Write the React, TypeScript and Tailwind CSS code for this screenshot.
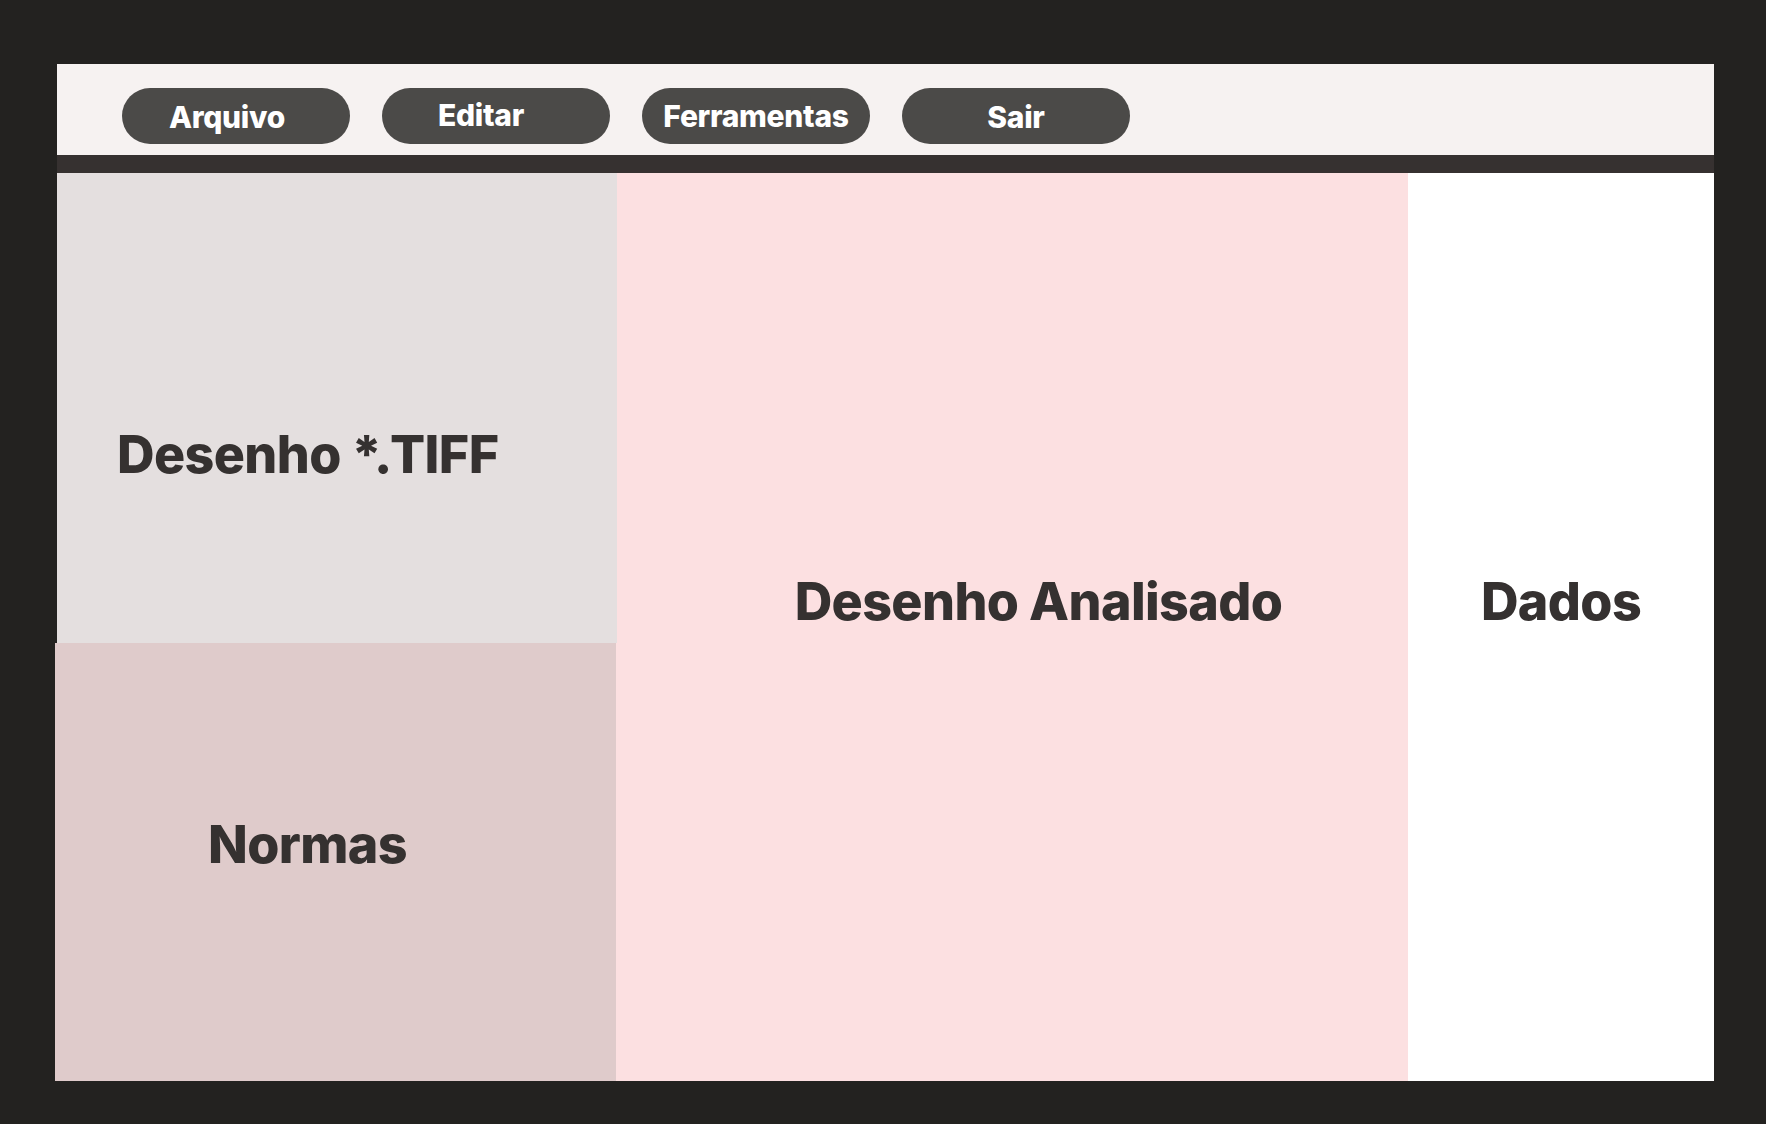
// App.tsx — layout mockup: menu bar + three analysis panels

const menu = [
  { label: 'Arquivo', cls: 'pt-[2px] pr-[18px]' },
  { label: 'Editar', cls: 'pr-[30px] pb-[3px]' },
  { label: 'Ferramentas', cls: '' },
  { label: 'Sair', cls: 'pt-[2px]' },
]

function MenuButton({ label, cls }: { label: string; cls: string }) {
  return (
    <button
      className={`w-[228px] h-[56px] rounded-full bg-[#4b4a48] text-white text-[30px] font-extrabold tracking-[-0.01em] leading-none flex items-center justify-center ${cls}`}
    >
      {label}
    </button>
  )
}

function Title({ children }: { children: string }) {
  return <h2 className="text-[52px] font-extrabold tracking-[-0.012em] leading-none">{children}</h2>
}

export default function App() {
  return (
    <div
      className="w-full min-h-screen h-[1124px] bg-[#232220] pl-[57px] pt-[64px]"
      style={{ fontFamily: 'Inter, "Noto Sans", sans-serif' }}
    >
      <div className="w-[1657px] h-[1017px] flex flex-col text-[#353130]">
        {/* Header */}
        <header className="h-[91px] bg-[#f6f2f1] flex items-start gap-[32px] pl-[65px] pt-[24px]">
          {menu.map((m) => (
            <MenuButton key={m.label} label={m.label} cls={m.cls} />
          ))}
        </header>
        <div className="h-[18px] bg-[#363130]" />

        {/* Body */}
        <div className="flex-1 flex">
          <div className="w-[560px] flex flex-col bg-[#fce0e1]">
            <div className="h-[470px] bg-[#e4dfdf] flex items-center pl-[60px] pt-[94px]">
              <Title>Desenho *.TIFF</Title>
            </div>
            <div className="flex-1 -ml-[2px] mr-[1px] bg-[#dfcbcb] flex items-center pl-[153px] pb-[35px]">
              <Title>Normas</Title>
            </div>
          </div>
          <div className="w-[791px] bg-[#fce0e1] flex items-center justify-center pl-[52px] pb-[50px]">
            <Title>Desenho Analisado</Title>
          </div>
          <div className="flex-1 bg-white flex items-center justify-center pb-[50px]">
            <Title>Dados</Title>
          </div>
        </div>
      </div>
    </div>
  )
}
